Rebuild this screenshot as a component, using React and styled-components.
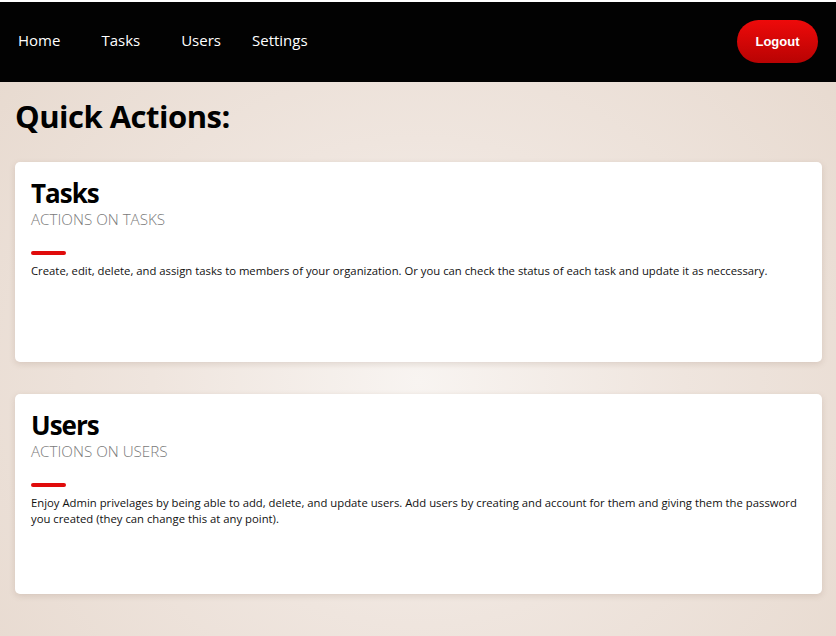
import React from 'react';
import styled, { createGlobalStyle } from 'styled-components';

const GlobalStyle = createGlobalStyle`
  html, body {
    margin: 0;
    padding: 0;
    min-height: 100%;
  }
  body {
    font-family: "Open Sans", "Noto Sans", sans-serif;
    background: radial-gradient(ellipse at 50% 60%, #f8f4f1 0%, #efe5de 45%, #e6d8cd 100%);
    background-attachment: fixed;
    min-height: 636px;
  }
`

const cards = [
  {
    title: 'Tasks',
    subtitle: 'Actions on tasks',
    text: 'Create, edit, delete, and assign tasks to members of your organization. Or you can check the status of each task and update it as neccessary.',
  },
  {
    title: 'Users',
    subtitle: 'Actions on users',
    text: 'Enjoy Admin privelages by being able to add, delete, and update users. Add users by creating and account for them and giving them the password you created (they can change this at any point).',
  },
]

const links = [
  { label: 'Home', space: 41 },
  { label: 'Tasks', space: 41 },
  { label: 'Users', space: 31 },
  { label: 'Settings', space: 0 },
]

const App = () => {
  return (
    <Page>
      <GlobalStyle />
      <NavBar>
        <NavLinks>
          {links.map(link => (
            <NavLink key={link.label} $space={link.space} href="#">{link.label}</NavLink>
          ))}
        </NavLinks>
        <LogoutButton>Logout</LogoutButton>
      </NavBar>
      <Main>
        <Heading>Quick Actions:</Heading>
        <CardList>
          {cards.map(card => (
            <Card key={card.title}>
              <CardTitle>{card.title}</CardTitle>
              <CardSubtitle>{card.subtitle}</CardSubtitle>
              <RedBar />
              <CardText>{card.text}</CardText>
            </Card>
          ))}
        </CardList>
      </Main>
    </Page>
  )
}

const Page = styled.div`
  border-top: 2px solid #ffffff;
  min-height: 634px;
`
const NavBar = styled.nav`
  height: 80px;
  background: #020202;
  display: flex;
  align-items: center;
  justify-content: space-between;
  padding: 0 18px;
`
const NavLinks = styled.div`
  display: flex;
  align-items: center;
  margin-top: -4px;
`
const NavLink = styled.a`
  color: #ffffff;
  text-decoration: none;
  font-size: 15px;
  margin-right: ${props => props.$space}px;
`
const LogoutButton = styled.button`
  width: 81px;
  height: 43px;
  border: none;
  border-radius: 22px;
  background: linear-gradient(to bottom, #ee0a0a, #b80303);
  color: #ffffff;
  font-family: "Liberation Sans", Arial, sans-serif;
  font-weight: bold;
  font-size: 13px;
  margin-top: -1px;
  cursor: pointer;
`
const Main = styled.main`
  padding: 0 14px 0 15px;
`
const Heading = styled.h1`
  margin: 0;
  padding-top: 14px;
  font-size: 31px;
  letter-spacing: -0.5px;
  font-weight: 700;
  color: #000000;
  line-height: 40px;
`
const CardList = styled.div`
  display: flex;
  flex-direction: column;
  gap: 32px;
  margin-top: 26px;
`
const Card = styled.section`
  background: #ffffff;
  height: 200px;
  box-sizing: border-box;
  border-radius: 5px;
  padding: 14px 16px;
  box-shadow: 0 2px 6px rgba(120, 90, 70, 0.18);
`
const CardTitle = styled.h2`
  margin: 0;
  font-size: 26px;
  letter-spacing: -1px;
  font-weight: 700;
  line-height: 34px;
  color: #000000;
`
const CardSubtitle = styled.div`
  text-transform: uppercase;
  font-weight: 300;
  font-size: 15.2px;
  color: #7a7a7a;
  line-height: 18px;
`
const RedBar = styled.div`
  width: 35px;
  height: 4px;
  border-radius: 2px;
  background: #e00b0b;
  margin: 23px 0 8px;
`
const CardText = styled.p`
  margin: 0;
  font-size: 11.3px;
  line-height: 16px;
  color: #111111;
`

export default App;
